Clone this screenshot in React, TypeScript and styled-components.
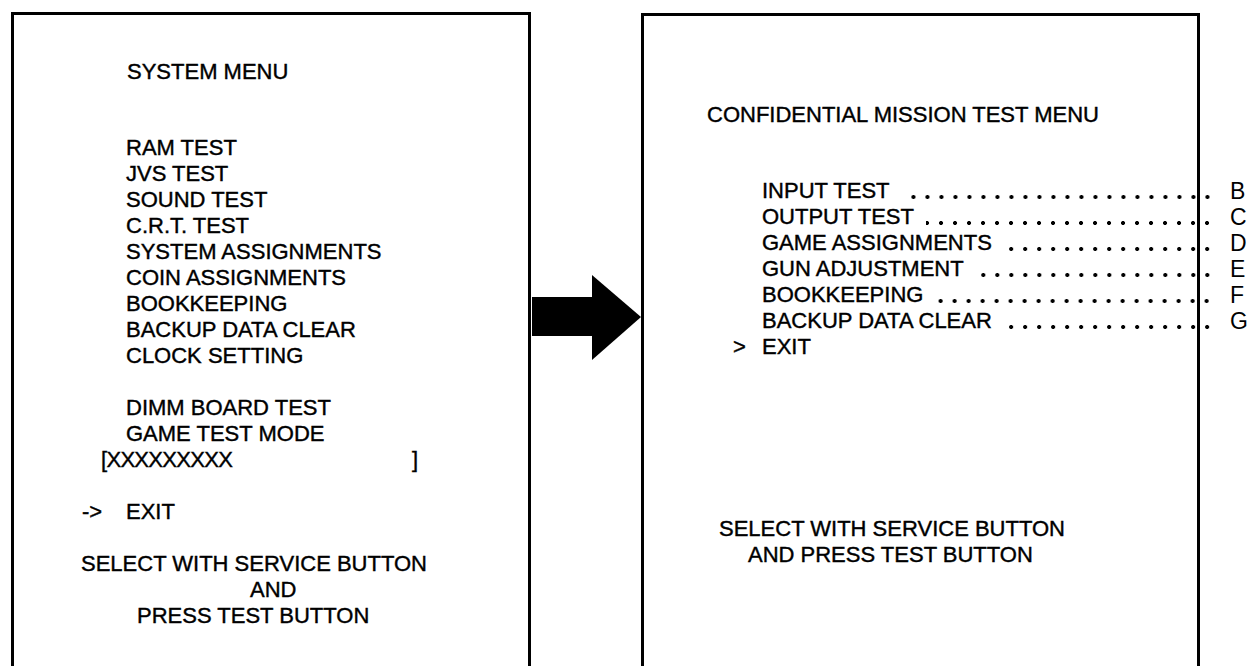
import React from 'react'
import styled, { createGlobalStyle } from 'styled-components'

const GlobalStyle = createGlobalStyle`
    html, body {
        margin: 0;
        padding: 0;
        background: #fff;
        overflow: hidden;
    }

    body {
        font-family: "Liberation Sans", Arial, sans-serif;
        color: #000;
    }
`

const Figure = styled.div`
    display: flex;
    align-items: flex-start;
    height: 666px;
    padding: 12px 0 0 11px;
    box-sizing: border-box;
`

const Screen = styled.section<{ $width: number; $top: number; $offset?: number }>`
    box-sizing: border-box;
    flex: none;
    width: ${p => p.$width}px;
    height: 700px;
    margin-top: ${p => p.$offset ?? 0}px;
    padding-top: ${p => p.$top}px;
    border: 3px solid #000;
    border-bottom: none;
    font-size: 22px;
    line-height: 26px;
    white-space: pre;
    -webkit-text-stroke: 0.4px #000;
`

const ScreenTitle = styled.div<{ $indent: number }>`
    margin: 0 0 50px ${p => p.$indent}px;
`

const MenuList = styled.div<{ $indent: number }>`
    display: flex;
    flex-direction: column;
    margin-left: ${p => p.$indent}px;
`

const MenuItem = styled.div``

const Blank = styled.div<{ $lines: number }>`
    height: ${p => p.$lines * 26}px;
`

const ItemRow = styled.div`
    display: flex;
    align-items: flex-start;
    margin-right: -53px;
`

const Leader = styled.span`
    flex: 1;
    height: 26px;
    margin: 0 16px 0 12px;
    background: radial-gradient(circle at center, #000 1.7px, transparent 2.3px) right 0 top 16px / 14px 6px repeat-x;
`

const SectionKey = styled.span`
    width: 20px;
    font-size: 23px;
    -webkit-text-stroke: 0;
`

const CursorRow = styled.div<{ $indent: number }>`
    display: flex;
    margin-left: ${p => p.$indent}px;
`

const Cursor = styled.span<{ $width: number }>`
    width: ${p => p.$width}px;
`

const NameField = styled.div`
    display: flex;
    justify-content: space-between;
    width: 317px;
    margin-left: 87px;
`

const Placeholder = styled.span`
    letter-spacing: -0.7px;
`

const NoteLine = styled.div<{ $indent: number }>`
    margin-left: ${p => p.$indent}px;
`

const ArrowColumn = styled.div`
    flex: none;
    width: 110px;
    padding-top: 263px;
`

const systemItems = [
    'RAM TEST',
    'JVS TEST',
    'SOUND TEST',
    'C.R.T. TEST',
    'SYSTEM ASSIGNMENTS',
    'COIN ASSIGNMENTS',
    'BOOKKEEPING',
    'BACKUP DATA CLEAR',
    'CLOCK SETTING',
]

const missionItems = [
    { label: 'INPUT TEST', key: 'B' },
    { label: 'OUTPUT TEST', key: 'C' },
    { label: 'GAME ASSIGNMENTS', key: 'D' },
    { label: 'GUN ADJUSTMENT', key: 'E' },
    { label: 'BOOKKEEPING', key: 'F' },
    { label: 'BACKUP DATA CLEAR', key: 'G' },
]

const Arrow = () => (
    <svg width="110" height="86" viewBox="0 0 110 86">
        <rect x="1" y="22" width="61" height="39" fill="#000" />
        <polygon points="61,0 110,42 61,85" fill="#000" />
    </svg>
)

const App = () => {
    return (
        <>
            <GlobalStyle />
            <Figure>
                <Screen $width={520} $top={44}>
                    <ScreenTitle $indent={113}>SYSTEM MENU</ScreenTitle>
                    <MenuList $indent={112}>
                        {systemItems.map(item => (
                            <MenuItem key={item}>{item}</MenuItem>
                        ))}
                        <Blank $lines={1} />
                        <MenuItem>DIMM BOARD TEST</MenuItem>
                        <MenuItem>GAME TEST MODE</MenuItem>
                    </MenuList>
                    <NameField>
                        <Placeholder>[XXXXXXXXX</Placeholder>
                        <span>]</span>
                    </NameField>
                    <Blank $lines={1} />
                    <CursorRow $indent={68}>
                        <Cursor $width={44}>-&gt;</Cursor>
                        <span>EXIT</span>
                    </CursorRow>
                    <Blank $lines={1} />
                    <NoteLine $indent={67}>SELECT WITH SERVICE BUTTON</NoteLine>
                    <NoteLine $indent={236}>AND</NoteLine>
                    <NoteLine $indent={123}>PRESS TEST BUTTON</NoteLine>
                </Screen>

                <ArrowColumn>
                    <Arrow />
                </ArrowColumn>

                <Screen $width={559} $top={86} $offset={1}>
                    <ScreenTitle $indent={63}>CONFIDENTIAL MISSION TEST MENU</ScreenTitle>
                    <MenuList $indent={118}>
                        {missionItems.map(item => (
                            <ItemRow key={item.key}>
                                <span>{item.label}</span>
                                <Leader />
                                <SectionKey>{item.key}</SectionKey>
                            </ItemRow>
                        ))}
                    </MenuList>
                    <CursorRow $indent={89}>
                        <Cursor $width={29}>&gt;</Cursor>
                        <span>EXIT</span>
                    </CursorRow>
                    <Blank $lines={6} />
                    <NoteLine $indent={75}>SELECT WITH SERVICE BUTTON</NoteLine>
                    <NoteLine $indent={104}>AND PRESS TEST BUTTON</NoteLine>
                </Screen>
            </Figure>
        </>
    )
}

export default App
